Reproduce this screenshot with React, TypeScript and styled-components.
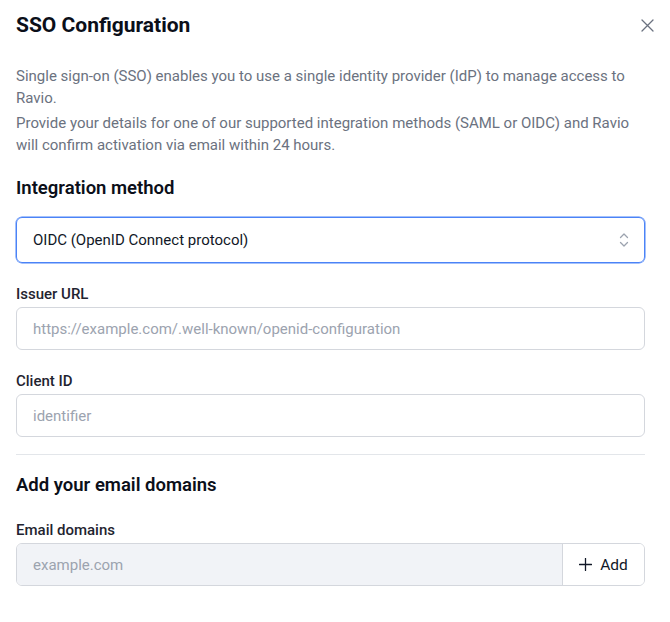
import React from 'react';
import styled, { createGlobalStyle } from 'styled-components';

const GlobalStyle = createGlobalStyle`
  * { box-sizing: border-box; }
  body {
    margin: 0;
    background: #ffffff;
    font-family: Roboto, "Noto Sans", sans-serif;
    color: #111827;
  }
`;

const Dialog = styled.div`
  width: 670px;
  padding: 10px 25px 24px 16px;
  position: relative;
`;

const Header = styled.header`
  display: flex;
  align-items: center;
  height: 30px;
`;

const Title = styled.h1`
  margin: 0;
  font-size: 21px;
  font-weight: 700;
  color: #0b0f19;
`;

const CloseButton = styled.button`
  position: absolute;
  top: 16px;
  right: 14px;
  width: 18px;
  height: 18px;
  padding: 0;
  border: 0;
  background: none;
  color: #6b7280;
  display: flex;
  align-items: center;
  justify-content: center;
`;

const Intro = styled.div`
  margin-top: 25px;
`;

const Description = styled.p`
  margin: 0;
  font-size: 15px;
  line-height: 22px;
  color: #6b7280;
  & + & {
    margin-top: 3px;
  }
`;

const SectionTitle = styled.h2<{ $top: number }>`
  margin: ${({ $top }) => $top}px 0 0;
  font-size: 18.5px;
  font-weight: 600;
  line-height: 26px;
  color: #0b0f19;
`;

const Field = styled.div<{ $top: number }>`
  margin-top: ${({ $top }) => $top}px;
  display: flex;
  flex-direction: column;
  gap: 4px;
`;

const Label = styled.label`
  font-size: 15px;
  font-weight: 500;
  line-height: 18px;
  color: #1f2430;
`;

const SelectBox = styled.div`
  height: 46px;
  border: 1px solid #4b83f7;
  border-radius: 6px;
  display: flex;
  align-items: center;
  justify-content: space-between;
  padding: 0 14px 0 16px;
  font-size: 15px;
  color: #111827;
  box-shadow: 0 0 0 0.5px #4b83f7;
`;

const TextInput = styled.input<{ $filled?: boolean }>`
  height: 43px;
  width: 100%;
  border: 1px solid #d4d7dd;
  border-radius: 6px;
  padding: 0 16px;
  font-family: inherit;
  font-size: 15px;
  color: #111827;
  background: ${({ $filled }) => ($filled ? '#f1f3f7' : '#ffffff')};
  outline: none;
  &::placeholder {
    color: #9ca3af;
  }
`;

const Divider = styled.hr`
  margin: 17px 0 0;
  border: 0;
  border-top: 1px solid #e3e6ea;
`;

const Group = styled.div`
  display: flex;
  height: 43px;
  border: 1px solid #d4d7dd;
  border-radius: 6px;
  overflow: hidden;
  & > input {
    border: 0;
    border-radius: 0;
    height: 100%;
    flex: 1;
  }
`;

const AddButton = styled.button`
  width: 82px;
  border: 0;
  border-left: 1px solid #d4d7dd;
  background: #ffffff;
  display: flex;
  align-items: center;
  justify-content: center;
  gap: 8px;
  font-family: inherit;
  font-size: 15.5px;
  color: #111827;
  padding: 0;
`;

const ChevronUpDown = () => (
  <svg width="12" height="16" viewBox="0 0 12 16" fill="none" stroke="#9ca3af" strokeWidth="1.3" strokeLinecap="round" strokeLinejoin="round">
    <path d="M2.5 5.5 6 2l3.5 3.5" />
    <path d="M2.5 10.5 6 14l3.5-3.5" />
  </svg>
);

const CloseIcon = () => (
  <svg width="13" height="13" viewBox="0 0 13 13" fill="none" stroke="currentColor" strokeWidth="1.3" strokeLinecap="round">
    <path d="M1 1l11 11M12 1 1 12" />
  </svg>
);

const PlusIcon = () => (
  <svg width="13" height="13" viewBox="0 0 13 13" fill="none" stroke="#111827" strokeWidth="1.3" strokeLinecap="round">
    <path d="M6.5 0.5v12M0.5 6.5h12" />
  </svg>
);

export default function App() {
  return (
    <>
      <GlobalStyle />
      <Dialog>
        <Header>
          <Title>SSO Configuration</Title>
        </Header>
        <CloseButton aria-label="Close">
          <CloseIcon />
        </CloseButton>

        <Intro>
          <Description>
            Single sign-on (SSO) enables you to use a single identity provider (IdP) to manage access to Ravio.
          </Description>
          <Description>
            Provide your details for one of our supported integration methods (SAML or OIDC) and Ravio will confirm activation via email within 24 hours.
          </Description>
        </Intro>

        <SectionTitle $top={19}>Integration method</SectionTitle>
        <Field $top={16}>
          <SelectBox>
            <span>OIDC (OpenID Connect protocol)</span>
            <ChevronUpDown />
          </SelectBox>
        </Field>

        <Field $top={22}>
          <Label>Issuer URL</Label>
          <TextInput placeholder="https://example.com/.well-known/openid-configuration" />
        </Field>

        <Field $top={22}>
          <Label>Client ID</Label>
          <TextInput placeholder="identifier" />
        </Field>

        <Divider />

        <SectionTitle $top={17}>Add your email domains</SectionTitle>

        <Field $top={23}>
          <Label>Email domains</Label>
          <Group>
            <TextInput $filled placeholder="example.com" />
            <AddButton>
              <PlusIcon />
              Add
            </AddButton>
          </Group>
        </Field>
      </Dialog>
    </>
  );
}
